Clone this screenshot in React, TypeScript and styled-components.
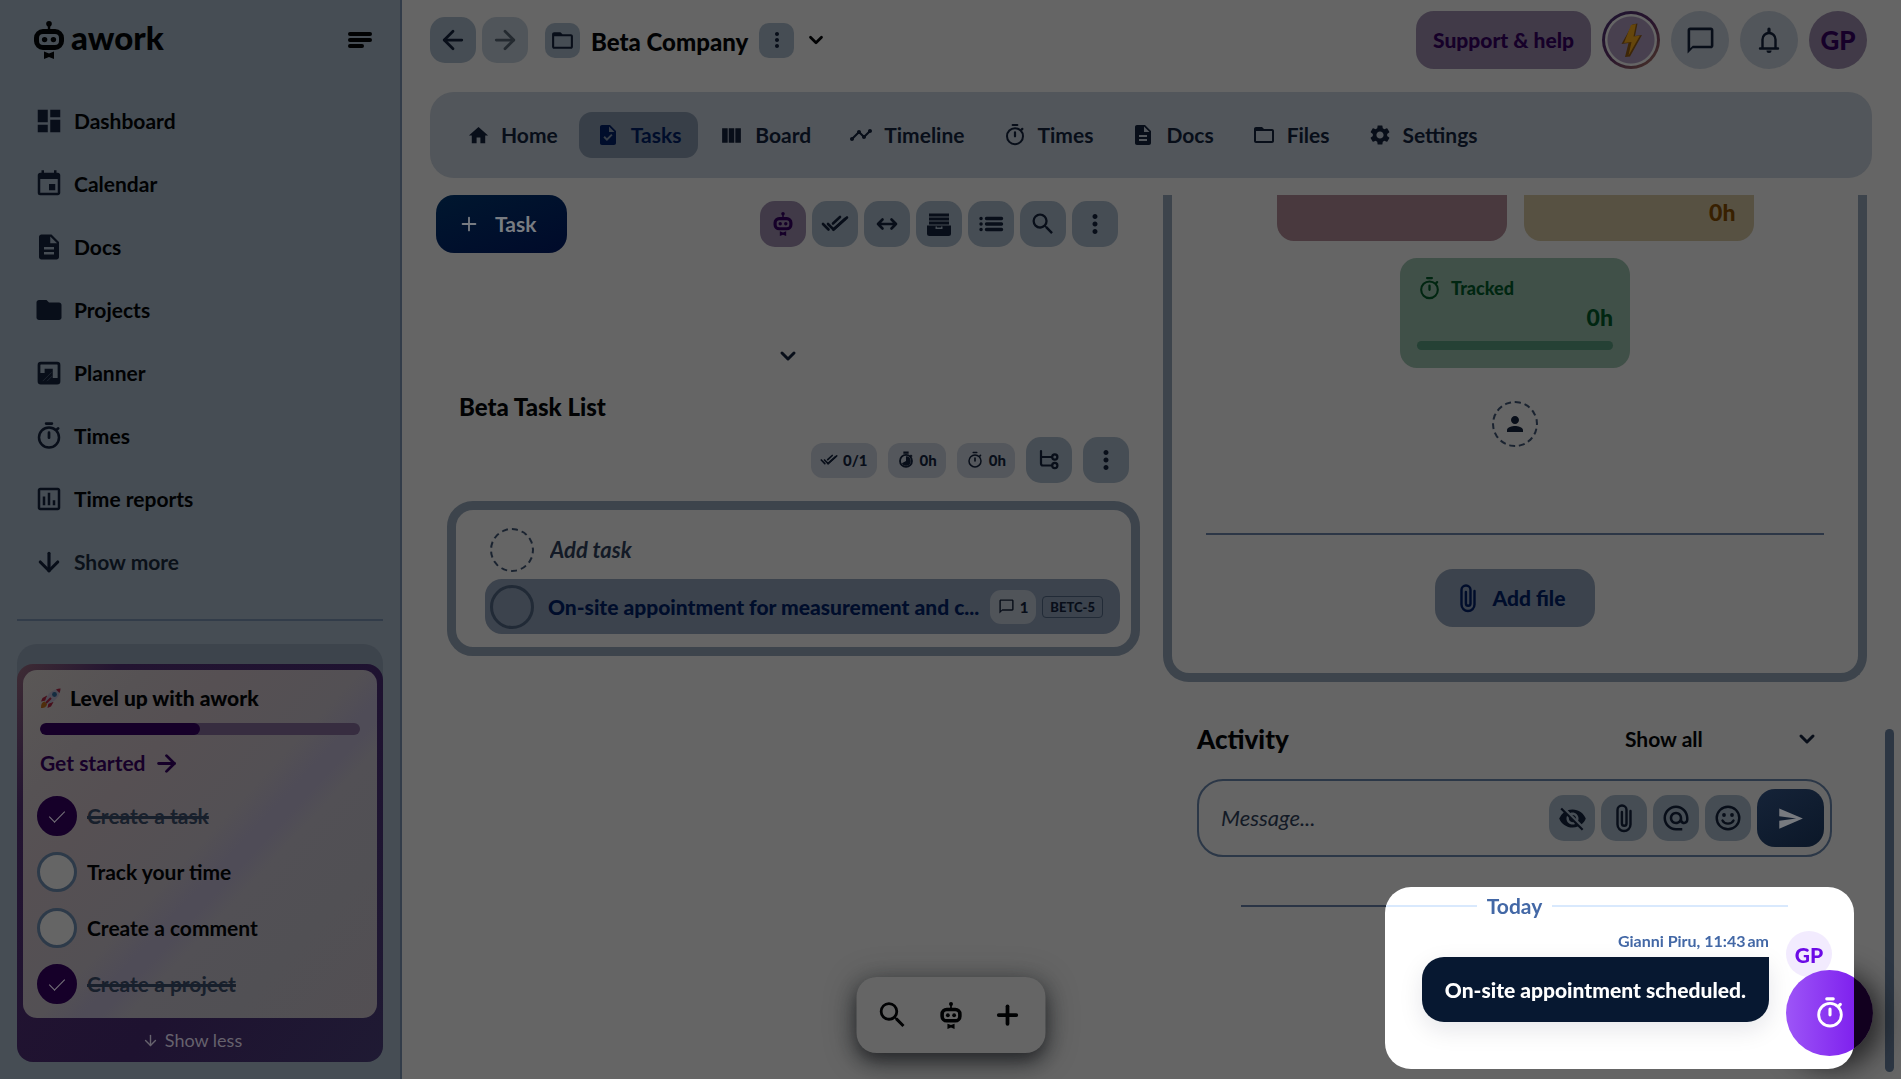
import React from "react";
import styled, { createGlobalStyle, css } from "styled-components";
import {
  MdDashboard,
  MdEvent,
  MdDescription,
  MdFolder,
  MdFolderOpen,
  MdOutlineAssessment,
  MdHome,
  MdTask,
  MdViewColumn,
  MdTimeline,
  MdSettings,
  MdMoreVert,
  MdSearch,
  MdPerson,
  MdChatBubbleOutline,
  MdVisibilityOff,
  MdAlternateEmail,
  MdSend,
} from "react-icons/md";
import { ArrowDown, ArrowLeft, ArrowRight, ChevronDown, Plus } from "lucide-react";

const c = {
  page: "#656565",
  side: "#464d54",
  line: "#323c49",
  frame: "#3d444c",
  bar: "#52565b",
  chip: "#54575c",
  ink: "#080e19",
  black: "#010203",
  purple: "#160029",
  lilac: "#413a48",
  navy: "#000d2b",
};

const Global = createGlobalStyle`
  *, *::before, *::after { box-sizing: border-box; }
  body { margin: 0; background: ${c.page}; }
  body, button, input, select { font-family: Lato, "Noto Sans", sans-serif; }
  button { border: 0; padding: 0; margin: 0; cursor: pointer; }
  a { text-decoration: none; }
  h1, h2, h3, p, ul { margin: 0; padding: 0; }
  li { list-style: none; }
  svg { display: block; flex: none; }
`;

/* ---------- drawings ---------- */

const Robot = ({ size }: { size: number }) => (
  <svg width={size} height={size} viewBox="0 0 38 38" fill="none" aria-hidden="true">
    <circle cx="19" cy="2.8" r="2.8" fill="currentColor" />
    <path d="M19 3v7" stroke="currentColor" strokeWidth="2.4" />
    <rect x="6.5" y="10.5" width="25" height="16" rx="6.500" stroke="currentColor" strokeWidth="5" />
    <circle cx="14.6" cy="18.600" r="2.7" fill="currentColor" />
    <circle cx="23.4" cy="18.600" r="2.7" fill="currentColor" />
    <path d="M14 30.5l5 2 5-2v7.500l-5-2-5 2z" fill="currentColor" />
  </svg>
);

const PlannerIcon = () => (
  <svg width="30" height="30" viewBox="0 0 24 24" fill="none" aria-hidden="true">
    <rect x="4" y="4" width="16" height="16" rx="1.500" stroke="currentColor" strokeWidth="2.2" />
    <path d="M4 12h4.500V8.500H15V16h5v4H4z" fill="currentColor" />
    <path d="M7 18.500l7-7M10.500 18.500l4-4" stroke="#2a323c" strokeWidth="0.500" />
  </svg>
);

const TimerGlyph = ({ size }: { size: number }) => (
  <svg width={size} height={size} viewBox="0 0 24 24" fill="none" stroke="currentColor" strokeLinecap="round" aria-hidden="true">
    <circle cx="12" cy="13.200" r="8" strokeWidth="2" />
    <path d="M9.700 2h4.600M12 9.300v4M18.600 6.600l.7-.7" strokeWidth="2.2" />
  </svg>
);

const EstimateGlyph = () => (
  <svg width="18" height="18" viewBox="0 0 24 24" fill="none" stroke="currentColor" aria-hidden="true">
    <circle cx="12" cy="13.200" r="8" strokeWidth="2.400" />
    <path d="M8.500 2h7M18.300 7l1.400-1.400" strokeWidth="3" />
    <path d="M12 13.200V7a6.300 6.300 0 1 1-5.500 9.300z" fill="currentColor" stroke="none" />
  </svg>
);

const TripleCheck = ({ size }: { size: number }) => (
  <svg width={size} height={size} viewBox="0 0 28 28" fill="none" stroke="currentColor" strokeWidth="2.600" strokeLinecap="round" aria-hidden="true">
    <path d="M2 14l5.500 5.500M7 14l5.500 5.500L26 7.500M12 13.500l7-6.500" />
    <path d="M12.500 19.500L24 9" />
  </svg>
);

const WidthGlyph = () => (
  <svg width="26" height="26" viewBox="0 0 26 26" fill="none" stroke="currentColor" strokeWidth="2.600" strokeLinecap="round" strokeLinejoin="round" aria-hidden="true">
    <path d="M4 13h18M8.500 8.500L4 13l4.500 4.500M17.500 8.500L22 13l-4.500 4.500" />
  </svg>
);

const DrawerGlyph = () => (
  <svg width="26" height="26" viewBox="0 0 26 26" fill="currentColor" aria-hidden="true">
    <path d="M3 2.500h20v3H3zM3 6.500h20v3H3zM3 10.500h20v3H3z" />
    <path fillRule="evenodd" d="M1 14.500h24v8a2.500 2.500 0 0 1-2.500 2.500h-19A2.500 2.500 0 0 1 1 22.500zM9.500 15.500v2.500h7v-2.500h-1.500v1h-4v-1z" />
  </svg>
);

const ListGlyph = () => (
  <svg width="26" height="26" viewBox="0 0 26 26" fill="none" stroke="currentColor" strokeWidth="3.400" strokeLinecap="round" aria-hidden="true">
    <path d="M8.500 7.500h15M8.500 13h15M8.500 18.500h15M3 7.500h.1M3 13h.1M3 18.500h.1" />
  </svg>
);

const TreeGlyph = () => (
  <svg width="22" height="22" viewBox="0 0 22 22" fill="none" stroke="currentColor" strokeWidth="2.200" strokeLinecap="round" aria-hidden="true">
    <path d="M3 2v12.500a2 2 0 0 0 2 2h9M3 8h11" />
    <circle cx="16.800" cy="8" r="2.600" />
    <circle cx="16.800" cy="16.500" r="2.600" />
  </svg>
);

const ClipGlyph = () => (
  <svg width="30" height="30" viewBox="0 0 30 30" fill="none" stroke="currentColor" strokeWidth="2.400" strokeLinecap="round" aria-hidden="true">
    <path d="M21.500 8v13.500a6.500 6.500 0 0 1-13 0V7a4.500 4.500 0 0 1 9 0v13.500a2.300 2.300 0 0 1-4.600 0V9" />
  </svg>
);

const SmileGlyph = () => (
  <svg width="28" height="28" viewBox="0 0 28 28" fill="none" stroke="currentColor" strokeWidth="2.400" aria-hidden="true">
    <circle cx="14" cy="14" r="11.300" />
    <circle cx="10" cy="11" r="1.900" fill="currentColor" stroke="none" />
    <circle cx="18" cy="11" r="1.900" fill="currentColor" stroke="none" />
    <path d="M8.500 16.500c2.200 4.200 8.800 4.200 11 0" strokeLinecap="round" />
  </svg>
);

const BellGlyph = () => (
  <svg width="28" height="28" viewBox="0 0 28 28" fill="none" stroke="currentColor" strokeWidth="2.400" strokeLinejoin="round" aria-hidden="true">
    <path d="M5 22.500h18M7.500 22v-8.500a6.500 6.500 0 0 1 13 0V22" strokeLinecap="round" />
    <path d="M14 3v3.500" strokeWidth="3.200" strokeLinecap="round" />
    <path d="M11.500 24.500h5a2.500 2.500 0 0 1-5 0z" fill="currentColor" stroke="none" />
  </svg>
);

const BoltGlyph = () => (
  <svg width="34" height="36" viewBox="0 0 34 36" aria-hidden="true">
    <path d="M18.500 2.500l5-1-2.500 12.500 7-1-12 21.500-5 .5 3.500-14-7 1z" fill="#3d2608" />
    <path d="M17 3l5-1-2.500 12.500 6.500-1-11.500 20 3-13.500-7.500 1z" fill="#65460c" />
  </svg>
);

const RocketGlyph = () => (
  <svg width="22" height="22" viewBox="0 0 22 22" aria-hidden="true">
    <path d="M1 21c0-4 1-6 3.500-6.500L7 17c-.5 2.500-2 4-6 4z" fill="#4f2e0c" />
    <path d="M7 8.500L2.500 11 1 14.500l5-1zM13.500 15L11 19.500 7.500 21l1-5z" fill="#48101c" />
    <path d="M5 14C7 7 13 2 20.500 1.500 20 9 15 15 8 17z" fill="#4e4b55" />
    <path d="M16 2.500c1.500-.7 3-1 4.500-1-.1 1.500-.3 3-1 4.500z" fill="#48101c" />
    <circle cx="14.500" cy="7.500" r="2.400" fill="#142c40" />
    <path d="M6 16l5-5" stroke="#48101c" strokeWidth="2" />
  </svg>
);

const Burger = () => (
  <svg width="26" height="18" viewBox="0 0 26 18" stroke="currentColor" strokeWidth="4" strokeLinecap="round" aria-hidden="true">
    <path d="M3 3h20M3 9h20M3 15h12" />
  </svg>
);

/* ---------- shell ---------- */

const Shell = styled.div`
  display: grid;
  grid-template-columns: 402px minmax(0, 1fr);
  height: 100vh;
  overflow: hidden;
  background: ${c.page};
  color: ${c.black};
`;

const Sidebar = styled.aside`
  display: flex;
  flex-direction: column;
  padding: 20px 17px 17px;
  background: ${c.side};
  border-right: 2px solid ${c.line};
`;

const Brand = styled.div`
  display: flex;
  align-items: center;
  justify-content: space-between;
  height: 40px;
  padding: 0 10px 0 13px;
`;

const Logo = styled.a`
  display: flex;
  align-items: center;
  gap: 3px;
  color: ${c.black};
  font-size: 33px;
  line-height: 36px;
  font-weight: 900;
`;

const Wordmark = styled.span`
  padding-bottom: 6px;
`;

const PlainButton = styled.button`
  display: grid;
  place-items: center;
  background: none;
  color: ${c.black};
`;

const SideNav = styled.nav`
  display: flex;
  flex-direction: column;
  margin-top: 29px;
  padding-bottom: 26px;
  border-bottom: 2px solid ${c.line};
`;

const SideLink = styled.a<{ $muted?: boolean }>`
  display: flex;
  align-items: center;
  gap: 10px;
  height: 63px;
  padding-left: 17px;
  font-size: 21px;
  line-height: 28px;
  font-weight: 700;
  color: ${(p) => (p.$muted ? "#0b1119" : c.black)};
  svg {
    color: ${c.ink};
  }
`;

const LevelWrap = styled.section`
  margin-top: auto;
  padding-top: 20px;
  border-radius: 20px 20px 16px 16px;
  background: ${c.frame};
`;

const LevelCard = styled.div`
  padding: 6px 6px 0;
  border-radius: 16px;
  background: linear-gradient(125deg, #3e2c34 0, #231431 16%, #1e1230 60%, #1f1a33 100%);
`;

const LevelInner = styled.div`
  height: 348px;
  padding: 14px 14px 12px;
  border-radius: 14px;
  background: linear-gradient(
    133deg,
    #5a5756 0%,
    #565254 18%,
    #565053 30%,
    #535054 50%,
    #4f4c57 56%,
    #4f4c57 59%,
    #525055 63%,
    #515054 78%,
    #534f53 100%
  );
`;

const LevelTitle = styled.h2`
  display: flex;
  align-items: center;
  gap: 8px;
  padding-left: 3px;
  font-size: 21px;
  line-height: 28px;
  font-weight: 900;
`;

const Progress = styled.div`
  height: 12px;
  margin: 11px 3px 0;
  border-radius: 6px;
  background: #372d40;
  overflow: hidden;
`;

const ProgressFill = styled.div<{ $value: number }>`
  width: ${(p) => p.$value}%;
  height: 100%;
  border-radius: 6px;
  background: ${c.purple};
`;

const StartLink = styled.a`
  display: flex;
  align-items: center;
  gap: 7px;
  margin-top: 14px;
  padding-left: 3px;
  font-size: 21px;
  line-height: 28px;
  font-weight: 700;
  color: ${c.purple};
`;

const Steps = styled.ul`
  display: grid;
  gap: 16px;
  margin-top: 19px;
`;

const Step = styled.li`
  display: flex;
  align-items: center;
  gap: 10px;
  height: 40px;
`;

const StepLabel = styled.label<{ $done: boolean }>`
  font-size: 21px;
  line-height: 28px;
  font-weight: 700;
  color: ${(p) => (p.$done ? "#18202c" : c.black)};
  text-decoration: ${(p) => (p.$done ? "line-through" : "none")};
  text-decoration-thickness: 3px;
`;

const StepBox = styled.input`
  appearance: none;
  display: grid;
  place-items: center;
  width: 40px;
  height: 40px;
  margin: 0;
  border: 3px solid #2d3a49;
  border-radius: 50%;
  background: ${c.page};
  &:checked {
    border-color: ${c.purple};
    background: ${c.purple};
  }
  &:checked::after {
    content: "";
    width: 8px;
    height: 15px;
    margin-bottom: 4px;
    border: solid #77747b;
    border-width: 0 1px 1px 0;
    transform: rotate(45deg);
  }
`;

const ShowLess = styled.button`
  display: flex;
  align-items: center;
  justify-content: center;
  gap: 6px;
  width: 100%;
  height: 44px;
  padding-right: 16px;
  background: none;
  color: #66626d;
  font-size: 18px;
  line-height: 24px;
`;

/* ---------- main header ---------- */

const Main = styled.main`
  display: flex;
  flex-direction: column;
  min-width: 0;
  min-height: 0;
`;

const Header = styled.header`
  display: flex;
  align-items: center;
  justify-content: space-between;
  padding: 11px 34px 23px 28px;
`;

const Group = styled.div<{ $gap: number }>`
  display: flex;
  align-items: center;
  gap: ${(p) => p.$gap}px;
`;

const Crumb = styled.div`
  display: flex;
  align-items: center;
  gap: 11px;
  margin-left: 11px;
`;

const IconButton = styled.button<{ $size?: number; $tone?: "lilac" | "faint" }>`
  display: grid;
  place-items: center;
  flex: none;
  width: ${(p) => p.$size ?? 46}px;
  height: ${(p) => p.$size ?? 46}px;
  border-radius: ${(p) => (p.$size ? 10 : 15)}px;
  background: ${(p) => (p.$tone === "lilac" ? c.lilac : p.$tone === "faint" ? "#50555a" : c.side)};
  color: ${(p) => (p.$tone === "lilac" ? c.purple : p.$tone === "faint" ? "#242a30" : c.ink)};
`;

const Title = styled.h1`
  font-size: 24px;
  line-height: 30px;
  font-weight: 900;
  padding-top: 3px;
`;

const Support = styled.button`
  height: 58px;
  padding: 0 17px;
  border-radius: 18px;
  background: ${c.lilac};
  color: ${c.purple};
  font-size: 21px;
  line-height: 28px;
  font-weight: 900;
`;

const Round = styled.button<{ $kind: "plain" | "user" | "ring" }>`
  display: grid;
  place-items: center;
  width: 58px;
  height: 58px;
  border-radius: 50%;
  font-size: 26px;
  line-height: 30px;
  font-weight: 900;
  background: ${c.bar};
  color: ${c.ink};
  ${(p) =>
    p.$kind === "user" &&
    css`
      background: ${c.lilac};
      color: ${c.purple};
    `}
  ${(p) =>
    p.$kind === "ring" &&
    css`
      border: 3px solid transparent;
      background:
        radial-gradient(circle, #48404f 0 23px, ${c.page} 24px) padding-box,
        linear-gradient(140deg, #1d1430, #28142c 50%, #4a3428) border-box;
    `}
`;

const Tabs = styled.nav`
  display: flex;
  align-items: center;
  gap: 4px;
  height: 86px;
  margin: 0 29px 0 28px;
  padding: 0 20px;
  border-radius: 24px;
  background: ${c.bar};
`;

const Tab = styled.a<{ $active?: boolean }>`
  display: flex;
  align-items: center;
  gap: 11px;
  height: 46px;
  padding: 0 17px;
  border-radius: 13px;
  font-size: 21px;
  line-height: 28px;
  font-weight: 700;
  background: ${(p) => (p.$active ? "#383f48" : "none")};
  color: ${(p) => (p.$active ? c.navy : c.ink)};
`;

/* ---------- content ---------- */

const Content = styled.div`
  display: grid;
  grid-template-columns: minmax(0, 1fr) minmax(0, 1fr);
  gap: 23px;
  flex: 1;
  min-height: 0;
  margin-top: 17px;
  padding: 0 34px;
`;

const Column = styled.div`
  min-width: 0;
`;

const ToolRow = styled.div`
  display: flex;
  align-items: center;
  justify-content: space-between;
  padding-right: 22px;
`;

const AddTask = styled.button`
  display: flex;
  align-items: center;
  gap: 15px;
  height: 58px;
  padding: 0 31px 0 22px;
  border-radius: 18px;
  background: linear-gradient(160deg, #00172f, #000a2a);
  color: #787c82;
  font-size: 21px;
  line-height: 28px;
  font-weight: 700;
`;

const Collapse = styled.button`
  display: grid;
  place-items: center;
  width: 40px;
  height: 30px;
  margin: 88px auto 0;
  background: none;
  color: ${c.ink};
`;

const ListTitle = styled.h2`
  margin: 21px 0 0 23px;
  font-size: 24px;
  line-height: 30px;
  font-weight: 900;
`;

const Stats = styled.div`
  display: flex;
  align-items: center;
  justify-content: flex-end;
  gap: 11px;
  margin: 15px 11px 18px 0;
`;

const Stat = styled.span`
  display: flex;
  align-items: center;
  gap: 5px;
  height: 35px;
  padding: 0 9px;
  border-radius: 12px;
  background: ${c.chip};
  color: ${c.ink};
  font-size: 15px;
  line-height: 20px;
  font-weight: 900;
`;

const TaskBox = styled.div`
  height: 155px;
  margin-left: 11px;
  padding: 14px 11px 12px 29px;
  border: 9px solid ${c.frame};
  border-radius: 26px;
`;

const NewTask = styled.label`
  display: flex;
  align-items: center;
  gap: 16px;
  height: 54px;
  padding: 0 0 2px 5px;
`;

const DashedCircle = styled.span<{ $size: number }>`
  display: grid;
  place-items: center;
  flex: none;
  width: ${(p) => p.$size}px;
  height: ${(p) => p.$size}px;
  border: 2px dashed #1a2330;
  border-radius: 50%;
  color: ${c.ink};
`;

const BareInput = styled.input<{ $weight: number }>`
  flex: 1;
  min-width: 0;
  padding: 0;
  border: 0;
  outline: 0;
  background: none;
  font-size: 22px;
  line-height: 28px;
  font-weight: ${(p) => p.$weight};
  font-style: italic;
  &::placeholder {
    color: #131a26;
    opacity: 1;
  }
`;

const TaskRow = styled.div`
  display: flex;
  align-items: center;
  height: 55px;
  margin-top: 1px;
  padding: 0 17px 0 5px;
  border-radius: 17px;
  background: #3c434d;
`;

const TaskCheck = styled.input`
  appearance: none;
  flex: none;
  width: 44px;
  height: 44px;
  margin: 0 14px 0 0;
  border: 3px solid #212a36;
  border-radius: 50%;
`;

const TaskName = styled.a`
  flex: 1;
  min-width: 0;
  white-space: nowrap;
  font-size: 21px;
  line-height: 28px;
  font-weight: 900;
  color: ${c.navy};
`;

const Comments = styled.span`
  display: flex;
  align-items: center;
  gap: 5px;
  height: 34px;
  margin: 0 6px 0 0;
  padding: 0 8px;
  border-radius: 11px;
  background: #505459;
  color: ${c.ink};
  font-size: 15px;
  line-height: 20px;
  font-weight: 900;
`;

const TaskKey = styled.span`
  padding: 0 7px;
  border: 1px solid #222b37;
  border-radius: 4px;
  color: ${c.ink};
  font-size: 13px;
  line-height: 20px;
  font-weight: 900;
`;

/* ---------- right column ---------- */

const Panel = styled.section`
  display: flex;
  flex-direction: column;
  align-items: center;
  height: 487px;
  padding: 0 34px;
  border: solid ${c.frame};
  border-width: 0 9px 9px;
  border-radius: 0 0 26px 26px;
`;

const Cards = styled.div`
  display: grid;
  grid-template-columns: 230px 230px;
  gap: 17px;
`;

const CutCard = styled.div<{ $bg: string }>`
  height: 46px;
  padding: 2px 18px;
  border-radius: 0 0 17px 17px;
  background: ${(p) => p.$bg};
`;

const Hours = styled.p<{ $color: string }>`
  color: ${(p) => p.$color};
  font-size: 23px;
  line-height: 30px;
  font-weight: 900;
  text-align: right;
`;

const Tracked = styled.div`
  grid-column: 1 / -1;
  justify-self: center;
  width: 230px;
  height: 110px;
  padding: 16px 17px;
  border-radius: 17px;
  background: #405048;
`;

const TrackedHead = styled.div`
  display: flex;
  align-items: center;
  gap: 9px;
  height: 28px;
  color: #002611;
  font-size: 18px;
  line-height: 24px;
  font-weight: 900;
`;

const TrackedBar = styled.div`
  height: 9px;
  margin-top: 9px;
  border-radius: 5px;
  background: #254135;
`;

const Assign = styled.button`
  display: block;
  margin-top: 33px;
  background: none;
`;

const Rule = styled.hr`
  width: 100%;
  height: 2px;
  margin: 86px 0 34px;
  border: 0;
  background: #2c3646;
`;

const AddFile = styled.button`
  display: flex;
  align-items: center;
  gap: 10px;
  height: 58px;
  padding: 0 30px 0 18px;
  border-radius: 18px;
  background: #3c434d;
  color: ${c.navy};
  font-size: 21px;
  line-height: 28px;
  font-weight: 900;
`;

const Activity = styled.section`
  padding: 40px 35px 0 34px;
`;

const ActivityHead = styled.div`
  display: flex;
  align-items: center;
  justify-content: space-between;
`;

const ActivityTitle = styled.h2`
  font-size: 26px;
  line-height: 34px;
  font-weight: 900;
`;

const Filter = styled.label`
  display: grid;
  grid-template-columns: 170px 24px;
  align-items: center;
  padding-right: 13px;
  color: ${c.ink};
`;

const FilterSelect = styled.select`
  appearance: none;
  padding: 0;
  border: 0;
  background: none;
  color: ${c.black};
  font-size: 21px;
  line-height: 28px;
  font-weight: 700;
`;

const Composer = styled.form`
  display: flex;
  align-items: center;
  gap: 6px;
  height: 78px;
  margin-top: 23px;
  padding: 0 6px 0 22px;
  border: 2px solid #2b3747;
  border-radius: 26px;
`;

const Send = styled.button`
  display: grid;
  place-items: center;
  width: 67px;
  height: 58px;
  border-radius: 18px;
  background: linear-gradient(150deg, #152338, #0b1728);
  color: #777a7f;
`;

const Thread = styled.div`
  position: relative;
  z-index: 1;
  margin-top: 35px;
`;

const Highlight = styled.div`
  position: absolute;
  z-index: -1;
  top: -5px;
  right: -22px;
  width: 469px;
  height: 182px;
  border-radius: 26px;
  background: #ffffff;
`;

const DayRow = styled.div`
  display: flex;
  align-items: center;
  gap: 10px;
  padding: 0 44px;
  color: #4368a6;
  font-size: 21px;
  line-height: 28px;
  font-weight: 700;
`;

const DayLine = styled.span<{ $lit?: number }>`
  flex: 1;
  height: 2px;
  background: ${(p) =>
    p.$lit ? `linear-gradient(to left, #d9e9fd ${p.$lit}px, #2a3445 ${p.$lit}px)` : "#d9e9fd"};
`;

const Entry = styled.article`
  display: flex;
  justify-content: flex-end;
  gap: 17px;
  margin-top: 11px;
`;

const EntryBody = styled.div`
  display: flex;
  flex-direction: column;
  align-items: flex-end;
`;

const Meta = styled.p`
  color: #4368a6;
  font-size: 16px;
  line-height: 20px;
  font-weight: 700;
`;

const Bubble = styled.p`
  margin-top: 6px;
  padding: 19px 23px 18px;
  border-radius: 22px 0 22px 22px;
  background: #071831;
  color: #ffffff;
  font-size: 21px;
  line-height: 28px;
  font-weight: 900;
  box-shadow: 0 8px 24px rgba(7, 24, 49, 0.1);
`;

const Avatar = styled.span`
  display: grid;
  place-items: center;
  width: 46px;
  height: 46px;
  padding-top: 2px;
  border-radius: 50%;
  background: #f2ebfe;
  color: #6c0be6;
  font-size: 21px;
  line-height: 24px;
  font-weight: 900;
`;

/* ---------- floating pieces ---------- */

const ScrollThumb = styled.div`
  position: fixed;
  right: 7px;
  bottom: 7px;
  width: 9px;
  height: 343px;
  border-radius: 5px;
  background: #2c3643;
`;

const TimerShade = styled.div`
  position: fixed;
  right: 28px;
  bottom: 23px;
  width: 86px;
  height: 86px;
  border-radius: 50%;
  box-shadow: 3px 7px 26px 6px rgba(20, 20, 22, 0.75);
`;

const TimerButton = styled.button`
  position: fixed;
  z-index: 2;
  right: 28px;
  bottom: 23px;
  display: grid;
  place-items: center;
  width: 87px;
  height: 86px;
  border-radius: 50%;
  background: linear-gradient(90deg, #9d55f7 0, #7f22ee 68px, #12001f 68px);
  color: #ffffff;
`;

const Dock = styled.div`
  position: fixed;
  left: 50%;
  bottom: 26px;
  display: flex;
  align-items: center;
  justify-content: space-between;
  width: 189px;
  height: 76px;
  padding: 0 23px 0 19px;
  border-radius: 20px;
  background: ${c.page};
  box-shadow: 0 8px 20px rgba(20, 22, 25, 0.75), 0 4px 32px rgba(40, 44, 46, 0.4);
  transform: translateX(-50%);
`;

const sideLinks = [
  { label: "Dashboard", icon: <MdDashboard size={30} /> },
  { label: "Calendar", icon: <MdEvent size={30} /> },
  { label: "Docs", icon: <MdDescription size={30} /> },
  { label: "Projects", icon: <MdFolder size={30} /> },
  { label: "Planner", icon: <PlannerIcon /> },
  { label: "Times", icon: <TimerGlyph size={30} /> },
  { label: "Time reports", icon: <MdOutlineAssessment size={30} /> },
  { label: "Show more", icon: <ArrowDown size={30} strokeWidth={2.5} />, muted: true },
];

const steps = [
  { label: "Create a task", done: true },
  { label: "Track your time", done: false },
  { label: "Create a comment", done: false },
  { label: "Create a project", done: true },
];

const tabs = [
  { label: "Home", icon: <MdHome size={23} /> },
  { label: "Tasks", icon: <MdTask size={24} />, active: true },
  { label: "Board", icon: <MdViewColumn size={25} /> },
  { label: "Timeline", icon: <MdTimeline size={24} /> },
  { label: "Times", icon: <TimerGlyph size={24} /> },
  { label: "Docs", icon: <MdDescription size={24} /> },
  { label: "Files", icon: <MdFolderOpen size={24} /> },
  { label: "Settings", icon: <MdSettings size={24} /> },
];

const tools = [
  { label: "Select tasks", icon: <TripleCheck size={28} /> },
  { label: "Fit width", icon: <WidthGlyph /> },
  { label: "Archive", icon: <DrawerGlyph /> },
  { label: "List view", icon: <ListGlyph /> },
  { label: "Search tasks", icon: <MdSearch size={28} /> },
  { label: "More options", icon: <MdMoreVert size={30} /> },
];

const composerTools = [
  { label: "Hide from guests", icon: <MdVisibilityOff size={29} /> },
  { label: "Attach file", icon: <ClipGlyph /> },
  { label: "Mention", icon: <MdAlternateEmail size={30} /> },
  { label: "Emoji", icon: <SmileGlyph /> },
];

export default function App() {
  return (
    <>
      <Global />
      <Shell>
        <Sidebar>
          <Brand>
            <Logo href="#">
              <Robot size={38} />
              <Wordmark>awork</Wordmark>
            </Logo>
            <PlainButton aria-label="Toggle menu">
              <Burger />
            </PlainButton>
          </Brand>
          <SideNav>
            {sideLinks.map((l) => (
              <SideLink key={l.label} href="#" $muted={l.muted}>
                {l.icon}
                {l.label}
              </SideLink>
            ))}
          </SideNav>
          <LevelWrap>
            <LevelCard>
              <LevelInner>
                <LevelTitle>
                  <RocketGlyph />
                  Level up with awork
                </LevelTitle>
                <Progress>
                  <ProgressFill $value={50} />
                </Progress>
                <StartLink href="#">
                  Get started
                  <ArrowRight size={27} strokeWidth={2.5} />
                </StartLink>
                <Steps>
                  {steps.map((s, i) => (
                    <Step key={s.label}>
                      <StepBox id={`step-${i}`} type="checkbox" defaultChecked={s.done} />
                      <StepLabel htmlFor={`step-${i}`} $done={s.done}>
                        {s.label}
                      </StepLabel>
                    </Step>
                  ))}
                </Steps>
              </LevelInner>
              <ShowLess>
                <ArrowDown size={17} />
                Show less
              </ShowLess>
            </LevelCard>
          </LevelWrap>
        </Sidebar>

        <Main>
          <Header>
            <Group $gap={6}>
              <IconButton aria-label="Back">
                <ArrowLeft size={30} strokeWidth={2.2} />
              </IconButton>
              <IconButton aria-label="Forward" $tone="faint">
                <ArrowRight size={30} strokeWidth={2.2} />
              </IconButton>
              <Crumb>
                <IconButton aria-label="Project" $size={35}>
                  <MdFolderOpen size={25} />
                </IconButton>
                <Title>Beta Company</Title>
                <IconButton aria-label="Project options" $size={35}>
                  <MdMoreVert size={24} />
                </IconButton>
                <PlainButton aria-label="Switch project">
                  <ChevronDown size={22} strokeWidth={3} />
                </PlainButton>
              </Crumb>
            </Group>
            <Group $gap={11}>
              <Support>Support &amp; help</Support>
              <Round $kind="ring" aria-label="What's new">
                <BoltGlyph />
              </Round>
              <Round $kind="plain" aria-label="Chat">
                <MdChatBubbleOutline size={31} />
              </Round>
              <Round $kind="plain" aria-label="Notifications">
                <BellGlyph />
              </Round>
              <Round $kind="user">GP</Round>
            </Group>
          </Header>

          <Tabs>
            {tabs.map((t) => (
              <Tab key={t.label} href="#" $active={t.active}>
                {t.icon}
                {t.label}
              </Tab>
            ))}
          </Tabs>

          <Content>
            <Column>
              <ToolRow>
                <AddTask>
                  <Plus size={22} />
                  Task
                </AddTask>
                <Group $gap={6}>
                  <IconButton $tone="lilac" aria-label="Assistant">
                    <Robot size={24} />
                  </IconButton>
                  {tools.map((t) => (
                    <IconButton key={t.label} aria-label={t.label}>
                      {t.icon}
                    </IconButton>
                  ))}
                </Group>
              </ToolRow>
              <Collapse aria-label="Collapse">
                <ChevronDown size={24} strokeWidth={3} />
              </Collapse>
              <ListTitle>Beta Task List</ListTitle>
              <Stats>
                <Stat>
                  <TripleCheck size={18} />
                  0/1
                </Stat>
                <Stat>
                  <EstimateGlyph />
                  0h
                </Stat>
                <Stat>
                  <TimerGlyph size={18} />
                  0h
                </Stat>
                <IconButton aria-label="Subtasks">
                  <TreeGlyph />
                </IconButton>
                <IconButton aria-label="List options">
                  <MdMoreVert size={30} />
                </IconButton>
              </Stats>
              <TaskBox>
                <NewTask>
                  <DashedCircle $size={44} />
                  <BareInput $weight={700} placeholder="Add task" aria-label="Add task" />
                </NewTask>
                <TaskRow>
                  <TaskCheck type="checkbox" aria-label="Complete task" />
                  <TaskName href="#">On-site appointment for measurement and c...</TaskName>
                  <Comments>
                    <MdChatBubbleOutline size={17} />1
                  </Comments>
                  <TaskKey>BETC-5</TaskKey>
                </TaskRow>
              </TaskBox>
            </Column>

            <Column>
              <Panel>
                <Cards>
                  <CutCard $bg="#49393e" />
                  <CutCard $bg="#575142">
                    <Hours $color="#382000">0h</Hours>
                  </CutCard>
                  <Tracked>
                    <TrackedHead>
                      <TimerGlyph size={25} />
                      Tracked
                    </TrackedHead>
                    <Hours $color="#002611">0h</Hours>
                    <TrackedBar />
                  </Tracked>
                </Cards>
                <Assign aria-label="Assign user">
                  <DashedCircle $size={46}>
                    <MdPerson size={24} />
                  </DashedCircle>
                </Assign>
                <Rule />
                <AddFile>
                  <ClipGlyph />
                  Add file
                </AddFile>
              </Panel>

              <Activity>
                <ActivityHead>
                  <ActivityTitle>Activity</ActivityTitle>
                  <Filter>
                    <FilterSelect aria-label="Activity filter">
                      <option>Show all</option>
                    </FilterSelect>
                    <ChevronDown size={24} strokeWidth={3} />
                  </Filter>
                </ActivityHead>
                <Composer onSubmit={(e) => e.preventDefault()}>
                  <BareInput $weight={400} placeholder="Message..." aria-label="Message" />
                  {composerTools.map((t) => (
                    <IconButton key={t.label} type="button" aria-label={t.label}>
                      {t.icon}
                    </IconButton>
                  ))}
                  <Send aria-label="Send">
                    <MdSend size={27} />
                  </Send>
                </Composer>
                <Thread>
                  <Highlight />
                  <DayRow>
                    <DayLine $lit={91} />
                    Today
                    <DayLine />
                  </DayRow>
                  <Entry>
                    <EntryBody>
                      <Meta>Gianni Piru, 11:43{"\u2009"}am</Meta>
                      <Bubble>On-site appointment scheduled.</Bubble>
                    </EntryBody>
                    <Avatar>GP</Avatar>
                  </Entry>
                </Thread>
              </Activity>
            </Column>
          </Content>
        </Main>

        <ScrollThumb />
        <TimerShade />
        <TimerButton aria-label="Start timer">
          <TimerGlyph size={34} />
        </TimerButton>
        <Dock>
          <PlainButton aria-label="Search">
            <MdSearch size={34} />
          </PlainButton>
          <PlainButton aria-label="Assistant">
            <Robot size={27} />
          </PlainButton>
          <PlainButton aria-label="Create">
            <Plus size={30} strokeWidth={3} />
          </PlainButton>
        </Dock>
      </Shell>
    </>
  );
}
